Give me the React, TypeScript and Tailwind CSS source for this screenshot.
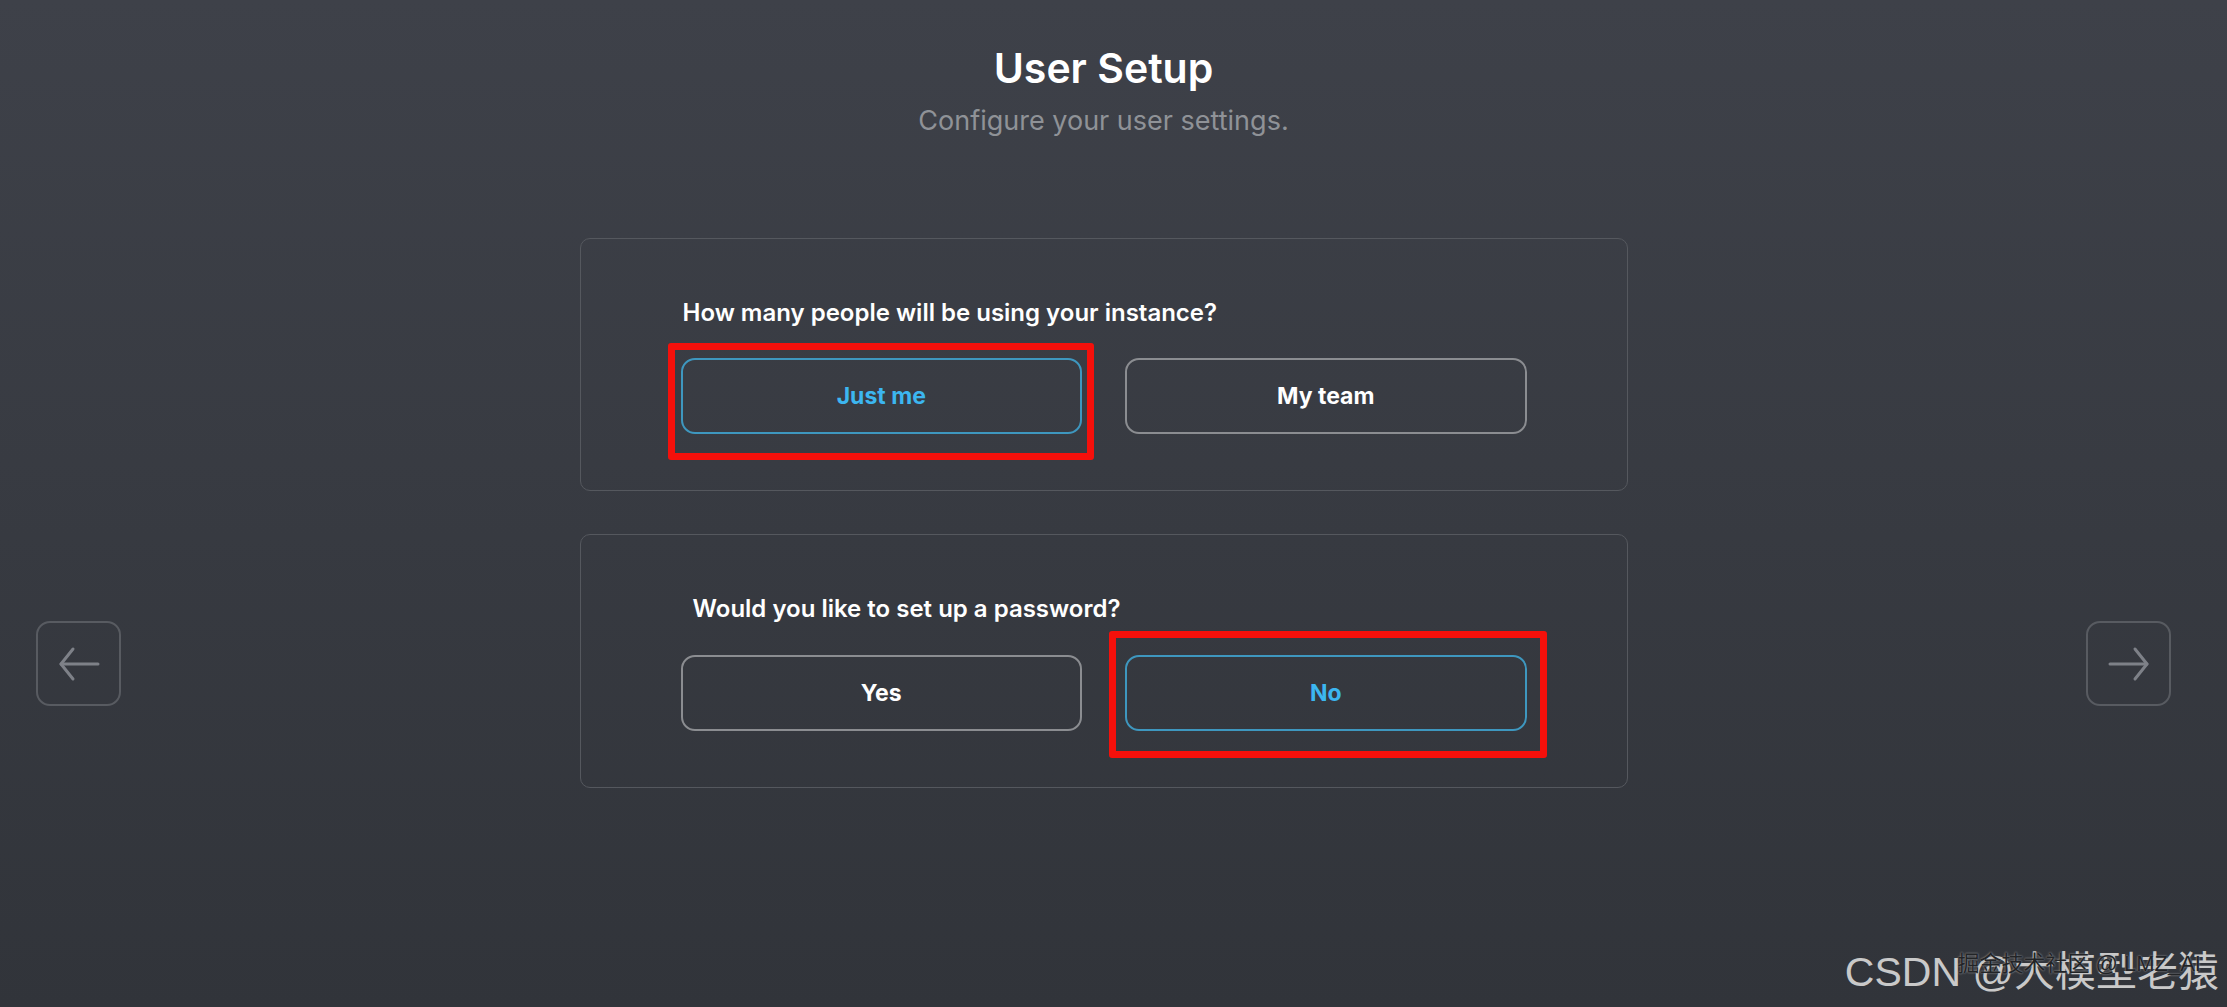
import React, { useState } from "react";

const font = { fontFamily: "Inter, 'Noto Sans', sans-serif" };

interface ChoiceProps {
  label: string;
  selected: boolean;
  marked?: "first" | "second";
  onClick: () => void;
}

// red annotation boxes from the screenshot, drawn over the chosen option
const Choice: React.FC<ChoiceProps> = ({ label, selected, marked, onClick }) => (
  <div className="relative w-[402px]">
    <button
      onClick={onClick}
      className={`h-[76px] w-full rounded-[14px] border-2 text-[23px] font-bold ${
        selected ? "border-[#3e97bf] text-[#3cb6f0]" : "border-[#8b8d91] text-white"
      }`}
    >
      {label}
    </button>
    {marked === "first" && (
      <div className="pointer-events-none absolute -left-[13px] -right-[12px] -top-[15px] -bottom-[26px] rounded-[3px] border-[7px] border-[#f5100b]" />
    )}
    {marked === "second" && (
      <div className="pointer-events-none absolute -left-[16px] -right-[20px] -top-[24px] -bottom-[27px] rounded-[3px] border-[7px] border-[#f5100b]" />
    )}
  </div>
);

const ArrowButton: React.FC<{ dir: "left" | "right" }> = ({ dir }) => (
  <button className="flex h-[85px] w-[85px] items-center justify-center rounded-[14px] border-2 border-[#585b61]">
    <svg width="44" height="36" viewBox="0 0 44 36" fill="none" stroke="#7e8188" strokeWidth="3" strokeLinecap="round" strokeLinejoin="round">
      {dir === "left" ? (
        <>
          <path d="M41 18H4" />
          <path d="M16 3L4 18l12 15" />
        </>
      ) : (
        <>
          <path d="M3 18h37" />
          <path d="M28 3l12 15-12 15" />
        </>
      )}
    </svg>
  </button>
);

export default function App() {
  const [people, setPeople] = useState("just");
  const [password, setPassword] = useState("no");

  return (
    <div
      className="relative flex h-[1007px] w-full overflow-hidden bg-gradient-to-b from-[#3e4149] to-[#31343a]"
      style={font}
    >
      <div className="pl-[36px] pt-[621px]">
        <ArrowButton dir="left" />
      </div>

      <div className="flex flex-1 flex-col items-center pt-[44px]">
        <h1 className="text-[41px] font-semibold leading-[48px] text-white">User Setup</h1>
        <p className="mt-[13px] text-[27px] leading-[32px] text-[#8f9297]">
          Configure your user settings.
        </p>

        <div className="mt-[101px] flex w-[1048px] flex-col gap-[43px]">
          <div className="rounded-[10px] border border-[#55585e] px-[100px] pt-[59px] pb-[56px]">
            <div className="pl-[2px] text-[24px] font-semibold leading-[30px] text-white">
              How many people will be using your instance?
            </div>
            <div className="mt-[30px] flex gap-[43px]">
              <Choice label="Just me" selected={people === "just"} marked="first" onClick={() => setPeople("just")} />
              <Choice label="My team" selected={people === "team"} onClick={() => setPeople("team")} />
            </div>
          </div>

          <div className="rounded-[10px] border border-[#55585e] px-[100px] pt-[59px] pb-[56px]">
            <div className="pl-[12px] text-[24px] font-semibold leading-[30px] text-white">
              Would you like to set up a password?
            </div>
            <div className="mt-[31px] flex gap-[43px]">
              <Choice label="Yes" selected={password === "yes"} onClick={() => setPassword("yes")} />
              <Choice label="No" selected={password === "no"} marked="second" onClick={() => setPassword("no")} />
            </div>
          </div>
        </div>
      </div>

      <div className="pr-[56px] pt-[621px]">
        <ArrowButton dir="right" />
      </div>

      {/* watermark */}
      <div
        className="pointer-events-none absolute bottom-[14px] right-[8px] text-[41px] leading-none text-[#c9c9c9]"
        style={{ fontFamily: "'Liberation Sans', 'Noto Sans CJK SC', sans-serif" }}
      >
        CSDN @大模型老猿
      </div>
      <div
        className="pointer-events-none absolute bottom-[32px] right-[26px] text-[22px] leading-none text-[#222427]"
        style={{ fontFamily: "'Liberation Sans', 'Noto Sans CJK SC', sans-serif", textShadow: "0 0 2px #b0b0b0" }}
      >
        掘金技术社区 @ LMZ_AI
      </div>
    </div>
  );
}
